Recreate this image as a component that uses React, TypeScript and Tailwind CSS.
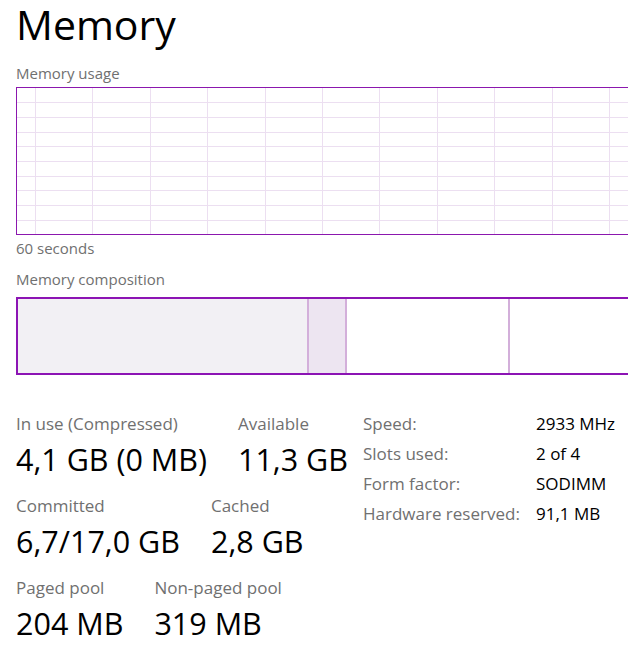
import React from "react";

const gridCols = [35, 92, 150, 207, 265, 322, 379, 437, 494, 552, 609];
const gridRows = [15, 30, 45, 59, 74, 89, 103, 118, 133];

const stats = [
  [
    { label: "In use (Compressed)", value: "4,1 GB (0 MB)" },
    { label: "Available", value: "11,3 GB" },
  ],
  [
    { label: "Committed", value: "6,7/17,0 GB" },
    { label: "Cached", value: "2,8 GB" },
  ],
  [
    { label: "Paged pool", value: "204 MB" },
    { label: "Non-paged pool", value: "319 MB" },
  ],
];

const details = [
  { label: "Speed:", value: "2933 MHz" },
  { label: "Slots used:", value: "2 of 4" },
  { label: "Form factor:", value: "SODIMM" },
  { label: "Hardware reserved:", value: "91,1 MB" },
];

function UsageChart() {
  return (
    <div className="h-[148px] w-[620px] border-y border-l border-[#8b17ae]">
      <svg width="620" height="146" className="block">
        {gridCols.map((x) => (
          <line key={x} x1={x - 16.5} x2={x - 16.5} y1={0} y2={146} stroke="#ecdff1" strokeWidth={1} />
        ))}
        {gridRows.map((y) => (
          <line key={y} x1={0} x2={620} y1={y - 0.5} y2={y - 0.5} stroke="#ecdff1" strokeWidth={1} />
        ))}
      </svg>
    </div>
  );
}

function CompositionBar() {
  return (
    <div className="flex h-[78px] w-[620px] border-2 border-r-0 border-[#8c14b4]">
      <div className="w-[289px] bg-[#f2f0f4]" />
      <div className="w-[2px] bg-[#d3afda]" />
      <div className="w-[36px] bg-[#ede5f1]" />
      <div className="w-[2px] bg-[#d3afda]" />
      <div className="w-[161px] bg-white" />
      <div className="w-[2px] bg-[#d3afda]" />
      <div className="flex-1 bg-white" />
    </div>
  );
}

export default function App() {
  return (
    <div className="h-[658px] w-[628px] overflow-hidden bg-white pl-4 font-['Open_Sans',sans-serif] text-black">
      <h1 className="text-[41px] leading-[48px] font-normal">Memory</h1>
      <p className="mt-[15px] text-[15px] leading-5 text-[#707070]">Memory usage</p>
      <div className="mt-[4px]">
        <UsageChart />
      </div>
      <p className="mt-[3px] text-[15px] leading-5 text-[#707070]">60 seconds</p>
      <p className="mt-[11px] text-[15px] leading-5 text-[#707070]">Memory composition</p>
      <div className="mt-[8px]">
        <CompositionBar />
      </div>

      <div className="mt-[37px] flex items-start">
        <div className="flex w-[347px] flex-col gap-[19px]">
          {stats.map((row, i) => (
            <div key={i} className="flex gap-[31px]">
              {row.map((s) => (
                <div key={s.label} className="flex flex-col">
                  <span className="text-[17px] leading-6 text-[#707070]">{s.label}</span>
                  <span className="mt-[7px] text-[30.5px] leading-8">{s.value}</span>
                </div>
              ))}
            </div>
          ))}
        </div>
        <div className="-mt-[3px] grid grid-cols-[173px_auto] text-[17px] leading-[30px]">
          {details.map((d) => (
            <React.Fragment key={d.label}>
              <span className="text-[#707070]">{d.label}</span>
              <span>{d.value}</span>
            </React.Fragment>
          ))}
        </div>
      </div>
    </div>
  );
}
